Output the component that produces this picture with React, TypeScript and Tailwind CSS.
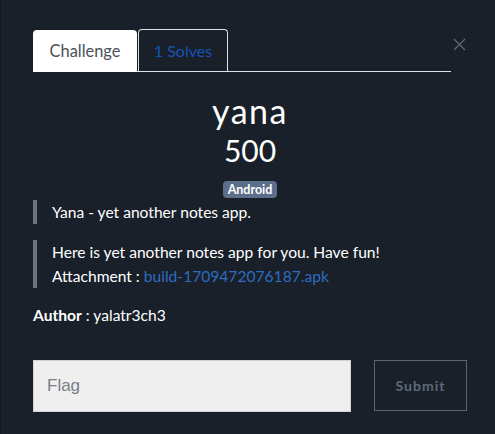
import React from 'react';

// Challenge modal — tabs, title, points, tag, description, flag form.

const lato = { fontFamily: 'Lato, "Noto Sans", sans-serif' };

export default function App() {
  return (
    <div className="w-full h-[434px] bg-[#19202a] text-white overflow-hidden border-l border-[#11161d]" style={lato}>
      <div className="pl-[32px] pr-[28px] pt-[30px]">
        <div className="flex items-start">
          <div className="flex-1 flex items-end border-b border-[#dee2e6] h-[42px]">
            <div className="h-[42px] w-[104px] bg-white rounded-t-[4px] flex items-center justify-center text-[16.4px] text-[#495057] -mb-px">
              Challenge
            </div>
            <div className="h-[42px] w-[90px] ml-px border border-b-0 border-[#dee2e6] rounded-t-[4px] flex items-center justify-center text-[16px] text-[#1553b6]">
              1 Solves
            </div>
          </div>
          <button className="w-[15px] h-[15px] mt-[7px] ml-[1px] text-[#5f666e] flex items-center justify-center">
            <svg width="13" height="13" viewBox="0 0 13 13" fill="none" stroke="currentColor" strokeWidth="1.3">
              <path d="M1 1L12 12M12 1L1 12" />
            </svg>
          </button>
        </div>

        <div className="text-center">
          <div className="text-[34px] leading-[40px] mt-[19px] tracking-[1.5px]">yana</div>
          <div className="text-[30px] leading-[36px] mt-[1px]">500</div>
          <div className="mt-[13px] inline-block bg-[#5b6e8a] rounded-[4px] px-[5px] h-[17px] leading-[17px] text-[12.5px] font-bold">Android</div>
        </div>

        <div className="border-l-[4px] border-[#6c757d] pl-[15px] text-[15.6px] leading-[24px]">
          Yana - yet another notes app.
        </div>
        <div className="border-l-[4px] border-[#6c757d] pl-[15px] mt-[16px] text-[15.6px] leading-[24px]">
          <div>Here is yet another notes app for you. Have fun!</div>
          <div>
            Attachment : <a className="text-[#2f6cc0]">build-1709472076187.apk</a>
          </div>
        </div>

        <div className="mt-[15px] text-[15.6px] leading-[24px]">
          <span className="font-bold">Author</span> : yalatr3ch3
        </div>

        <div className="flex items-start mt-[33px]">
          <div className="w-[318px] h-[52px] bg-[#efefef] border border-[#d0d4d8] flex items-center pl-[13px] text-[17px] text-[#7a8089]" style={{ fontFamily: '"Liberation Sans", Arial, sans-serif' }}>
            Flag
          </div>
          <button className="ml-[23px] w-[93px] h-[51px] border border-[#5d6670] text-[#5d6878] text-[14px] font-bold tracking-[1px]">
            Submit
          </button>
        </div>
      </div>
    </div>
  );
}
